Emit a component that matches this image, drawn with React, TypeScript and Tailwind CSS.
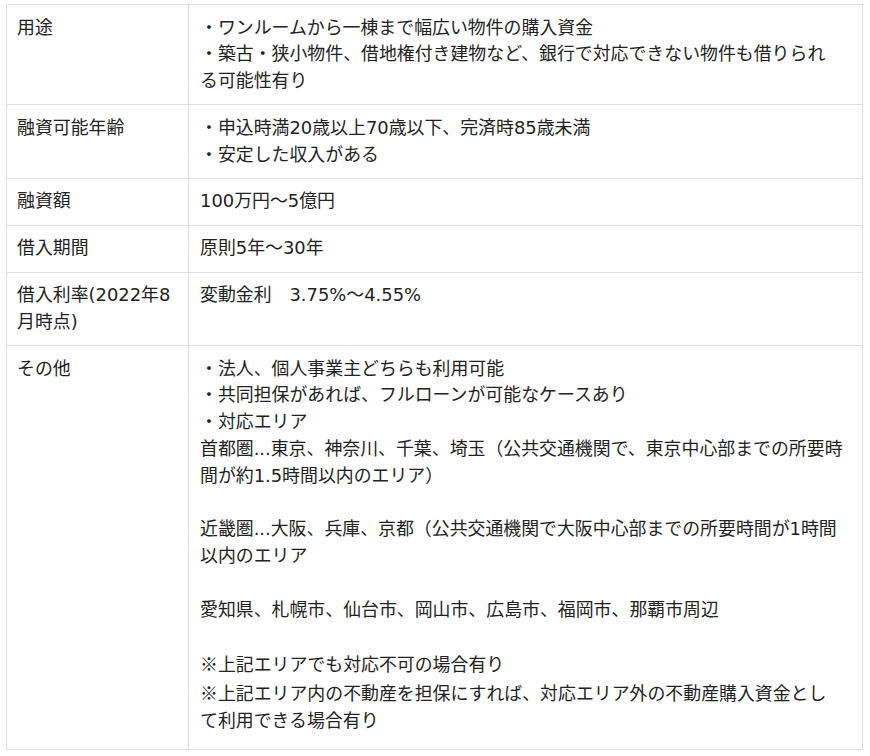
const rows: { label: string[]; lines: string[]; last?: boolean }[] = [
  {
    label: ['用途'],
    lines: [
      '・ワンルームから一棟まで幅広い物件の購入資金',
      '・築古・狭小物件、借地権付き建物など、銀行で対応できない物件も借りられ',
      'る可能性有り',
    ],
  },
  {
    label: ['融資可能年齢'],
    lines: ['・申込時満20歳以上70歳以下、完済時85歳未満', '・安定した収入がある'],
  },
  { label: ['融資額'], lines: ['100万円～5億円'] },
  { label: ['借入期間'], lines: ['原則5年～30年'] },
  { label: ['借入利率(2022年8', '月時点)'], lines: ['変動金利　3.75%～4.55%'] },
  {
    label: ['その他'],
    lines: [
      '・法人、個人事業主どちらも利用可能',
      '・共同担保があれば、フルローンが可能なケースあり',
      '・対応エリア',
      '首都圏...東京、神奈川、千葉、埼玉（公共交通機関で、東京中心部までの所要時',
      '間が約1.5時間以内のエリア）',
      '',
      '近畿圏...大阪、兵庫、京都（公共交通機関で大阪中心部までの所要時間が1時間',
      '以内のエリア',
      '',
      '愛知県、札幌市、仙台市、岡山市、広島市、福岡市、那覇市周辺',
      '',
      '※上記エリアでも対応不可の場合有り',
      '※上記エリア内の不動産を担保にすれば、対応エリア外の不動産購入資金とし',
      'て利用できる場合有り',
    ],
    last: true,
  },
];

// ※ is set in the CJK face so it keeps full width
const Line = ({ text }: { text: string }) => {
  if (!text) return <div className="h-[26.8px]" />;
  if (text.startsWith('※')) {
    return (
      <div>
        <span className="font-['Noto_Sans_CJK_JP']">※</span>
        {text.slice(1)}
      </div>
    );
  }
  return <div>{text}</div>;
};

const App = () => {
  return (
    <div className="min-h-[756px] w-[870px] bg-white pl-[6px] pt-[4px] font-['DejaVu_Sans','Noto_Sans_CJK_JP',sans-serif] text-[17.9px] leading-[26.8px] text-[#222]">
      <table className="w-[857px] table-fixed border-collapse">
        <colgroup>
          <col className="w-[182px]" />
          <col />
        </colgroup>
        <tbody>
          {rows.map((row, i) => (
            <tr key={i}>
              <td
                className={`border border-[#e0e0e0] pl-[10px] pr-[6px] align-top whitespace-nowrap pt-[9.5px] ${
                  row.last ? 'pb-[14px]' : 'pb-[9.5px]'
                }`}
              >
                {row.label.map((l, j) => (
                  <div key={j}>{l}</div>
                ))}
              </td>
              <td
                className={`border border-[#e0e0e0] pl-[11px] pr-[6px] align-top whitespace-nowrap pt-[9.5px] ${
                  row.last ? 'pb-[14px]' : 'pb-[9.5px]'
                }`}
              >
                {row.lines.map((l, j) => (
                  <Line key={j} text={l} />
                ))}
              </td>
            </tr>
          ))}
        </tbody>
      </table>
    </div>
  );
};

export default App;
